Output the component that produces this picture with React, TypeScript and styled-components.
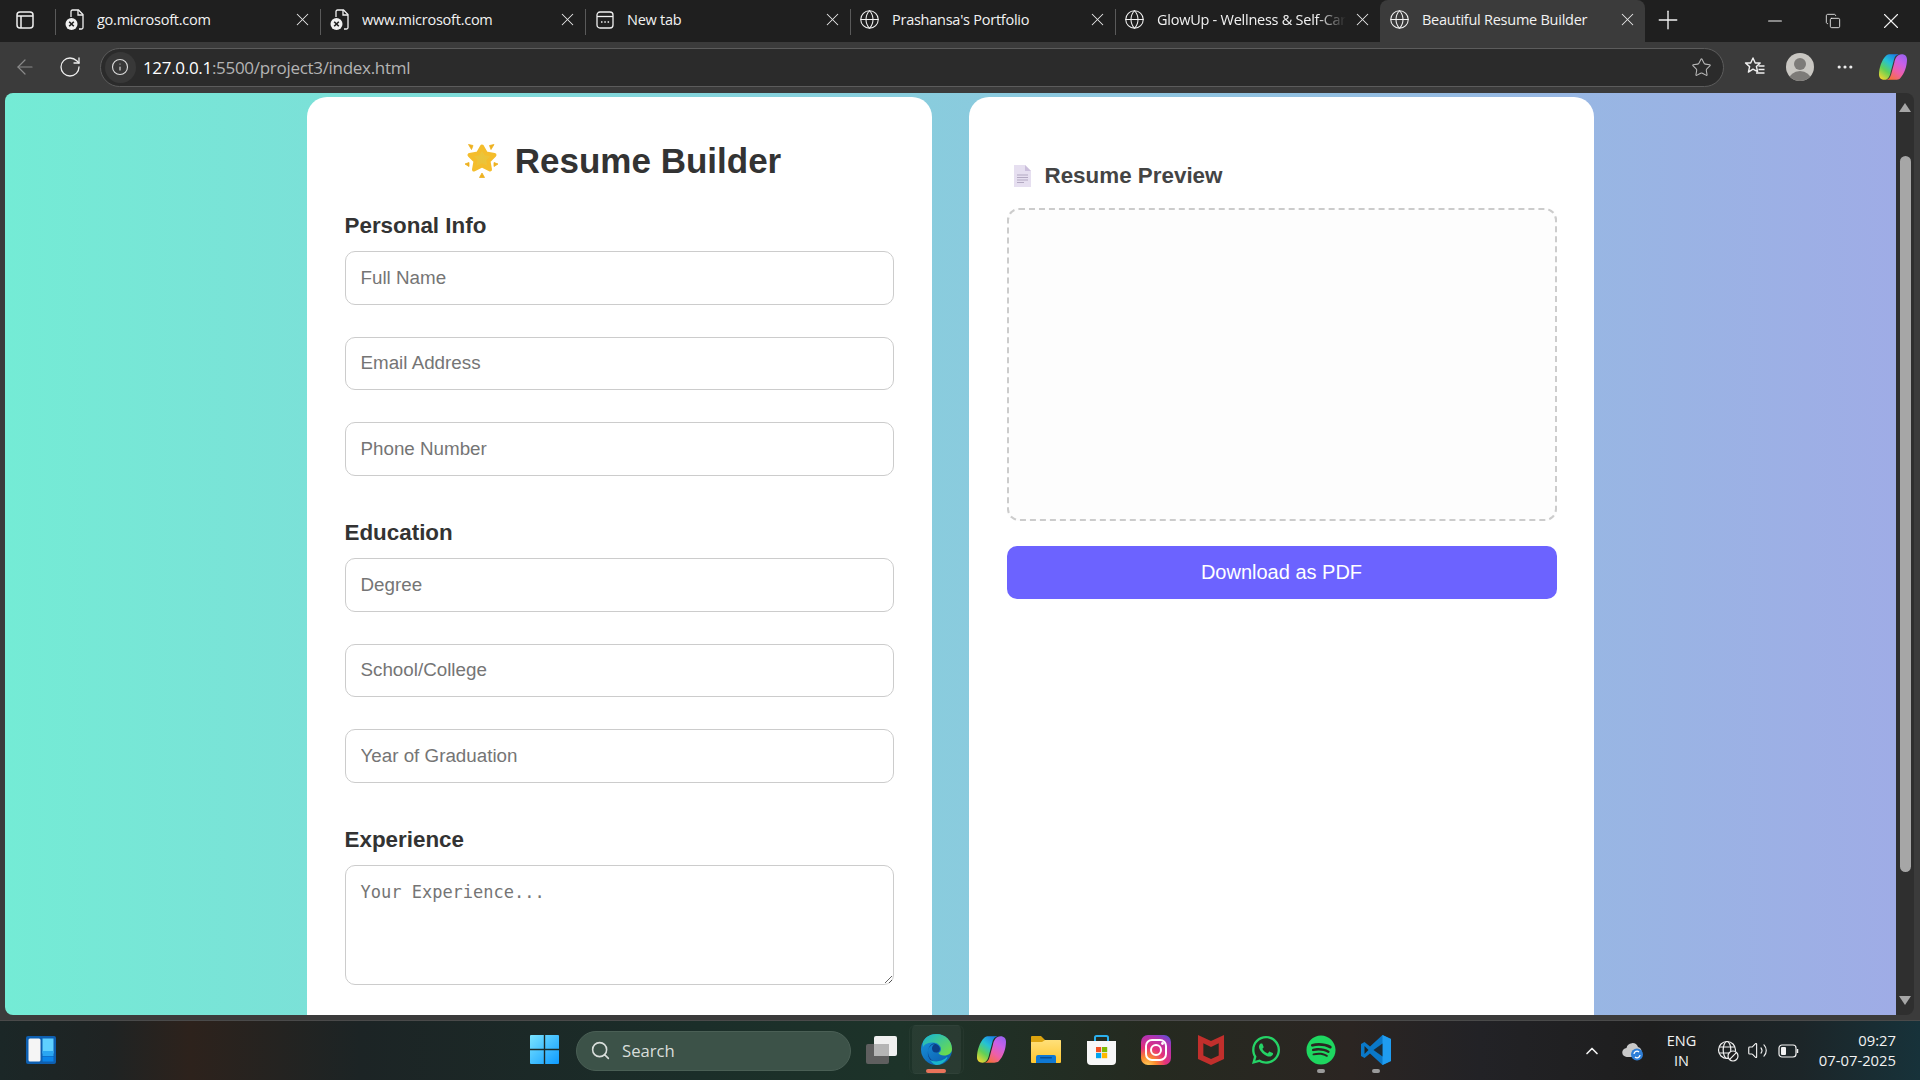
import * as React from 'react';
import styled, { createGlobalStyle } from 'styled-components';
import { ArrowLeft, ChevronUp, Copy, Ellipsis, Globe, Info, Minus, Plus, RotateCw, Search, Star, Volume2, X } from 'lucide-react';
import { FaWhatsapp, FaSpotify } from 'react-icons/fa';
import { SiMcafee } from 'react-icons/si';

const GlobalStyle = createGlobalStyle`
  html, body { margin: 0; padding: 0; background: #1f1f1f; }
  * { box-sizing: border-box; }
`;

const uiFont = `"Open Sans", "Noto Sans", sans-serif`;
const pageFont = `"Liberation Sans", Arial, sans-serif`;

const Screen = styled.div`
  width: 1920px;
  height: 1080px;
  display: flex;
  flex-direction: column;
  overflow: hidden;
  font-family: ${uiFont};
`;

const TabBar = styled.div`
  height: 42px;
  flex: none;
  display: flex;
  background: #1f1f1f;
  color: #f2f2f2;
`;

const SideButton = styled.div`
  width: 55px;
  padding: 11px 0 0 16px;
`;

const Tab = styled.div<{ $active?: boolean }>`
  width: 265px;
  height: 42px;
  padding: 0 6px 3px 9px;
  display: flex;
  align-items: center;
  position: relative;
  font-size: 14.5px;
  letter-spacing: -0.25px;
  background: ${(p) => (p.$active ? '#3b3b3b' : 'transparent')};
  border-radius: ${(p) => (p.$active ? '8px 8px 0 0' : '0')};
  &::before {
    content: '';
    display: ${(p) => (p.$active ? 'none' : 'block')};
    position: absolute;
    left: 0;
    top: 9px;
    height: 26px;
    width: 1px;
    background: #5a5a5a;
  }
`;

const TabIcon = styled.div`
  width: 21px;
  height: 21px;
  flex: none;
  display: flex;
  align-items: center;
  justify-content: center;
`;

const TabTitle = styled.div<{ $fade?: boolean }>`
  flex: 1;
  margin-left: 12px;
  white-space: nowrap;
  overflow: hidden;
  ${(p) => p.$fade && 'mask-image: linear-gradient(to right, #000 85%, transparent 100%);'}
`;

const TabClose = styled.div`
  width: 24px;
  display: flex;
  justify-content: center;
  margin-left: 4px;
  color: #e8e8e8;
`;

const NewTab = styled.div`
  width: 46px;
  height: 40px;
  display: flex;
  align-items: center;
  justify-content: center;
`;

const WindowControls = styled.div`
  margin-left: auto;
  display: flex;
`;

const WindowButton = styled.div`
  width: 58px;
  height: 42px;
  display: flex;
  align-items: center;
  justify-content: center;
`;

const Toolbar = styled.div`
  height: 51px;
  flex: none;
  background: #3b3b3b;
  display: flex;
  align-items: center;
  padding-bottom: 1px;
  color: #ededed;
`;

const NavButton = styled.div<{ $width: number; $dim?: boolean }>`
  width: ${(p) => p.$width}px;
  display: flex;
  justify-content: center;
  color: ${(p) => (p.$dim ? '#8a8a8a' : '#ededed')};
`;

const AddressBar = styled.div`
  width: 1626px;
  height: 39px;
  margin-left: 10px;
  margin-right: 9px;
  background: #2b2b2b;
  border: 1.5px solid #5c5c5c;
  border-radius: 20px;
  display: flex;
  align-items: center;
  padding: 0 11px 0 4px;
`;

const SiteInfo = styled.div`
  width: 31px;
  height: 31px;
  border-radius: 50%;
  background: #383838;
  display: flex;
  align-items: center;
  justify-content: center;
  color: #dcdcdc;
`;

const Url = styled.div`
  margin-left: 7px;
  flex: 1;
  font-size: 17px;
  letter-spacing: -0.3px;
  color: #b4b4b4;
  span { color: #fff; }
`;

const Avatar = styled.div`
  width: 28px;
  height: 28px;
  border-radius: 50%;
  background: #c9c7c2;
  position: relative;
  overflow: hidden;
  &::before {
    content: '';
    position: absolute;
    left: 8px;
    top: 5px;
    width: 12px;
    height: 12px;
    border-radius: 50%;
    background: #7d7b78;
  }
  &::after {
    content: '';
    position: absolute;
    left: 3px;
    top: 18px;
    width: 22px;
    height: 18px;
    border-radius: 50%;
    background: #7d7b78;
  }
`;

const Viewport = styled.div`
  flex: 1;
  min-height: 0;
  display: flex;
  background: #3b3b3b;
  padding: 0 6px 5px 5px;
  border-bottom: 1px solid #4a4a4a;
`;

const Page = styled.main`
  flex: 1;
  min-width: 0;
  overflow: hidden;
  display: flex;
  justify-content: center;
  align-items: flex-start;
  gap: 37px;
  padding-top: 4px;
  border-radius: 8px 0 0 8px;
  background: linear-gradient(to right, #74ebd5, #9face6);
  font-family: ${pageFont};
`;

const Card = styled.section`
  width: 625px;
  flex: none;
  min-height: 1000px;
  background: #fff;
  border-radius: 20px;
  padding: 37.5px;
`;

const Title = styled.h1`
  margin: 5px 0 30px;
  display: flex;
  justify-content: center;
  align-items: center;
  gap: 16px;
  color: #333;
  font-size: 35px;
  line-height: 42px;
  font-weight: 700;
  svg { margin-left: 7px; }
`;

const SectionTitle = styled.h3`
  margin: 0 0 12.5px;
  color: #333;
  font-size: 22.4px;
  line-height: 27px;
  font-weight: 700;
`;

const Group = styled.div`
  padding-bottom: 11px;
`;

const Field = styled.input`
  display: block;
  width: 549px;
  height: 53.5px;
  margin-bottom: 32px;
  padding: 0 15px;
  border: 1px solid #ccc;
  border-radius: 10px;
  font-family: ${pageFont};
  font-size: 18.8px;
  background: #fff;
  &::placeholder { color: #757575; opacity: 1; }
`;

const TextArea = styled.textarea`
  display: block;
  width: 549px;
  height: 120px;
  padding: 16px 15px;
  border: 1px solid #ccc;
  border-radius: 10px;
  font-family: "DejaVu Sans Mono", monospace;
  font-size: 17px;
  background: #fff;
  &::placeholder { color: #757575; opacity: 1; }
`;

const PreviewTitle = styled.h3`
  margin: 22.7px 0 13.8px;
  display: flex;
  align-items: center;
  gap: 14px;
  color: #444;
  font-size: 22.4px;
  line-height: 37px;
  font-weight: 700;
  svg { margin-left: 7px; }
`;

const PreviewBox = styled.div`
  height: 313px;
  border: 2px dashed #ccc;
  border-radius: 12px;
  background: #fdfdfd;
`;

const DownloadButton = styled.button`
  display: block;
  width: 100%;
  height: 53px;
  margin-top: 25px;
  border: none;
  border-radius: 10px;
  background: #6c63ff;
  color: #fff;
  font-family: ${pageFont};
  font-size: 20px;
`;

const ScrollBar = styled.div`
  width: 18px;
  flex: none;
  background: #2f2f2f;
  border-radius: 0 8px 8px 0;
  display: flex;
  flex-direction: column;
  align-items: center;
  padding: 10px 0;
  color: #a6a6a6;
`;

const Thumb = styled.div`
  width: 11px;
  height: 716px;
  margin-top: 44px;
  background: #a6a6a6;
  border-radius: 6px;
`;

const Arrow = styled.div<{ $down?: boolean }>`
  width: 0;
  height: 0;
  border-left: 6px solid transparent;
  border-right: 6px solid transparent;
  ${(p) => (p.$down ? 'border-top: 9px solid #a6a6a6; margin-top: auto;' : 'border-bottom: 9px solid #a6a6a6;')}
`;

const Taskbar = styled.footer`
  height: 59px;
  flex: none;
  display: flex;
  align-items: center;
  background: linear-gradient(to right, #1b2727 0, #1f2323 110px, #2d221c 190px, #1c2425 360px, #1b2e29 700px, #1d3329 900px, #252a20 1150px, #2b2522 1350px, #222226 1480px, #1e1e1e 1650px, #1c2528 1800px, #17323a 1920px);
  color: #f2f2f2;
`;

const WidgetsButton = styled.div`
  width: 517px;
  padding-left: 26px;
  margin-top: -2px;
  display: flex;
`;

const TaskButton = styled.div<{ $active?: boolean; $dot?: string }>`
  width: 55px;
  height: 49px;
  margin-top: -2px;
  display: flex;
  align-items: center;
  justify-content: center;
  position: relative;
  border-radius: 6px;
  ${(p) => p.$active && 'background: rgba(255,255,255,0.05); box-shadow: inset 0 0 0 1px rgba(255,255,255,0.03); background-clip: content-box; padding: 0 3px;'}
  ${(p) =>
    p.$dot &&
    `&::after {
      content: '';
      position: absolute;
      left: 50%;
      bottom: 1px;
      width: ${p.$active ? 20 : 8}px;
      height: 4px;
      margin-left: ${p.$active ? -10 : -4}px;
      border-radius: 2px;
      background: ${p.$dot};
    }`}
`;

const SearchPill = styled.div`
  width: 275px;
  height: 40px;
  margin: 0 2.5px 0 4px;
  display: flex;
  align-items: center;
  padding-left: 13px;
  gap: 11px;
  border-radius: 20px;
  background: #3c5248;
  border: 1px solid #4a5f55;
  font-size: 16.7px;
  color: #d9dedb;
`;

const Tray = styled.div`
  margin-left: auto;
  display: flex;
  align-items: center;
  padding-right: 24px;
`;

const TrayItem = styled.div<{ $width: number }>`
  width: ${(p) => p.$width}px;
  display: flex;
  justify-content: center;
  align-items: center;
`;

const Lang = styled.div`
  width: 67px;
  text-align: center;
  font-size: 14.5px;
  line-height: 20px;
`;

const Clock = styled.div`
  width: 94px;
  text-align: right;
  font-size: 14.8px;
  line-height: 20px;
  margin-top: -2px;
`;

const DocXIcon = () => (
  <svg width="20" height="22" viewBox="0 0 20 22" fill="none">
    <path d="M6 8V2.5A1.5 1.5 0 0 1 7.5 1h6L18 5.5V18.5A1.5 1.5 0 0 1 16.5 20H14" stroke="#f0f0f0" strokeWidth="1.3" />
    <path d="M13 1v5h5" stroke="#f0f0f0" strokeWidth="1.3" />
    <circle cx="6.5" cy="15" r="6" fill="#f0f0f0" />
    <path d="M4.2 12.7l4.6 4.6M8.8 12.7l-4.6 4.6" stroke="#1f1f1f" strokeWidth="1.6" />
  </svg>
);

const NewTabIcon = () => (
  <svg width="20" height="20" viewBox="0 0 20 20" fill="none" stroke="#f0f0f0" strokeWidth="1.3">
    <rect x="2" y="2" width="16" height="16" rx="3" />
    <path d="M2 6.5h16" />
    <path d="M6 12h1.5M9.3 12h1.5M12.6 12h1.5" strokeWidth="1.6" />
  </svg>
);

const SidebarIcon = () => (
  <svg width="18" height="18" viewBox="0 0 18 18" fill="none" stroke="#efefef" strokeWidth="1.5">
    <rect x="1" y="1" width="16" height="16" rx="3" />
    <path d="M1 5h16M5 5v12" />
  </svg>
);

const FavoritesIcon = () => (
  <svg width="22" height="22" viewBox="0 0 22 22" fill="none" stroke="#f0f0f0" strokeWidth="1.4" strokeLinejoin="round">
    <path d="M9 2l2.2 5h5l-3.8 3.5 1.2 5.2L9 13.2l-4.6 2.9 1.2-5.500L1.5 7h5.2z" />
    <path d="M14.500 10h6M14.500 13.500h6M12 17h8.500" />
  </svg>
);

const CopilotIcon = ({ size }: { size: number }) => (
  <svg width={size} height={size} viewBox="0 0 32 30">
    <defs>
      <linearGradient id={`cpA${size}`} x1="0.75" y1="0" x2="0.1" y2="1">
        <stop offset="0" stopColor="#1a7fe8" />
        <stop offset="0.35" stopColor="#25c2d4" />
        <stop offset="0.65" stopColor="#62d056" />
        <stop offset="1" stopColor="#f8d62e" />
      </linearGradient>
      <linearGradient id={`cpB${size}`} x1="0.25" y1="1" x2="0.85" y2="0">
        <stop offset="0" stopColor="#f6703a" />
        <stop offset="0.35" stopColor="#ee5fa8" />
        <stop offset="0.7" stopColor="#c760e8" />
        <stop offset="1" stopColor="#9a62ee" />
      </linearGradient>
    </defs>
    <path d="M8 2C9.500 .8 11 .5 13 .5H24C20 .5 18 3 17 7L13.500 20C12.500 25 11 29.500 6 29.500C2 29.500 0 27 0 23.500C0 16 3 7 8 2Z" fill={`url(#cpA${size})`} />
    <path d="M24 28C22.500 29.200 21 29.500 19 29.500H8C11 29.500 13 27 14 23L17.500 10C18.500 5 21 .5 26 .5C30 .5 32 3 32 6.500C32 14 29 23 24 28Z" fill={`url(#cpB${size})`} />
  </svg>
);

const WidgetsIcon = () => (
  <svg width="30" height="28" viewBox="0 0 30 28">
    <rect width="30" height="28" rx="2" fill="#0e5fb0" />
    <rect x="2.500" y="2.500" width="12" height="23" rx="1.500" fill="#f5f5f5" />
    <rect x="16.500" y="2.500" width="11" height="15" fill="#5fd0ff" />
    <rect x="16.500" y="15" width="11" height="5" fill="#2aa6f2" />
    <rect x="16.500" y="20.500" width="11" height="5" fill="#0b84e8" />
  </svg>
);

const WindowsIcon = () => (
  <svg width="29" height="29" viewBox="0 0 29 29">
    <defs>
      <linearGradient id="winBlue" x1="0" y1="0" x2="1" y2="1">
        <stop offset="0" stopColor="#7ae4ff" />
        <stop offset="1" stopColor="#0e9bff" />
      </linearGradient>
    </defs>
    <path d="M1 0h12.800v13.800H0V1a1 1 0 0 1 1-1zM15.200 0H28a1 1 0 0 1 1 1v12.800H15.200zM0 15.200h13.800V29H1a1 1 0 0 1-1-1zM15.200 15.200H29V28a1 1 0 0 1-1 1H15.200z" fill="url(#winBlue)" />
  </svg>
);

const TaskViewIcon = () => (
  <svg width="31" height="28" viewBox="0 0 31 28">
    <rect x="0" y="8" width="23" height="20" rx="2" fill="#5f5f5f" />
    <rect x="8" y="0" width="23" height="20" rx="2" fill="#f0f0f0" />
    <rect x="8" y="8" width="15" height="12" fill="#b5b5b5" />
  </svg>
);

const EdgeIcon = () => (
  <svg width="31" height="31" viewBox="0 0 31 31">
    <defs>
      <linearGradient id="edgeGreen" x1="0.2" y1="0" x2="1" y2="0.8">
        <stop offset="0" stopColor="#1eb8c8" />
        <stop offset="1" stopColor="#6ddc4a" />
      </linearGradient>
      <linearGradient id="edgeBlue" x1="0" y1="0" x2="0.7" y2="1">
        <stop offset="0" stopColor="#1a9ae0" />
        <stop offset="1" stopColor="#0c5fb0" />
      </linearGradient>
    </defs>
    <circle cx="15.500" cy="15.500" r="15.500" fill="url(#edgeBlue)" />
    <path d="M2 8C4 3 9 0 15.500 0 24 0 31 6.500 31 15c0 4-3.500 6.500-8 6.500-3 0-5-1-5.500-2.500 2-1 2.500-2.500 2.500-4 0-3-3-6.500-8-6.500-4 0-8 1-10 4.500z" fill="url(#edgeGreen)" />
    <path d="M12 9.500c4 0 7 2.500 7 5.500 0 1.500-1 3-3 3.500-3 .5-5-1.500-5-4 0-2 1-3.500 3-4.500-3 0-7 3-7 8 0 5 4 10 10 11-5 0-9-3-10-8-.5-5 1-10 5-11.500z" fill="#0b3f86" />
    <path d="M16 31c-2 0-5-2-7-5 2 1 6 2 9 1 3-.5 6-2 8-4 .5 0 .5 1 0 1.500-2 3.500-6 6.500-10 6.500z" fill="#1bb6c9" />
  </svg>
);

const ExplorerIcon = () => (
  <svg width="30" height="27" viewBox="0 0 30 27">
    <defs>
      <linearGradient id="folderY" x1="0" y1="0" x2="0" y2="1">
        <stop offset="0" stopColor="#ffe07a" />
        <stop offset="1" stopColor="#ffc62e" />
      </linearGradient>
    </defs>
    <path d="M1 0h9l4 4h15a1 1 0 0 1 1 1v6H0V1a1 1 0 0 1 1-1z" fill="#dca40f" />
    <path d="M0 6h11l3-2h15a1 1 0 0 1 1 1v21a1 1 0 0 1-1 1H1a1 1 0 0 1-1-1z" fill="url(#folderY)" />
    <path d="M5 27v-6a2 2 0 0 1 2-2h16a2 2 0 0 1 2 2v6z" fill="#0f78d4" />
    <rect x="9" y="21" width="12" height="1.500" rx=".7" fill="#0b4f94" />
  </svg>
);

const StoreIcon = () => (
  <svg width="29" height="30" viewBox="0 0 29 30">
    <path d="M8 6V2.500A1.500 1.500 0 0 1 9.500 1h10A1.500 1.500 0 0 1 21 2.500V6" fill="none" stroke="#2bb0ee" strokeWidth="2" />
    <path d="M0 6h29v20a4 4 0 0 1-4 4H4a4 4 0 0 1-4-4z" fill="#f7f7f7" />
    <rect x="9" y="12" width="5.200" height="5.200" fill="#f25022" />
    <rect x="15" y="12" width="5.200" height="5.200" fill="#7fba00" />
    <rect x="9" y="18" width="5.200" height="5.200" fill="#00a4ef" />
    <rect x="15" y="18" width="5.200" height="5.200" fill="#ffb900" />
  </svg>
);

const InstagramIcon = () => (
  <svg width="30" height="30" viewBox="0 0 30 30">
    <defs>
      <radialGradient id="igBg" cx="0.2" cy="1.050" r="1.250">
        <stop offset="0" stopColor="#ffd45e" />
        <stop offset="0.25" stopColor="#fb8a2e" />
        <stop offset="0.5" stopColor="#e5327a" />
        <stop offset="0.8" stopColor="#b532b0" />
        <stop offset="1" stopColor="#5b50d6" />
      </radialGradient>
    </defs>
    <rect width="30" height="30" rx="7" fill="url(#igBg)" />
    <rect x="5" y="5" width="20" height="20" rx="6" fill="none" stroke="#fff" strokeWidth="2" />
    <circle cx="15" cy="15" r="5" fill="none" stroke="#fff" strokeWidth="2" />
    <circle cx="21.500" cy="8.500" r="1.400" fill="#fff" />
  </svg>
);

const VsCodeIcon = () => (
  <svg width="30" height="30" viewBox="0 0 30 30">
    <path d="M21.500 0L30 4v22l-8.500 4L9 18.500 3.500 23 0 21V9l3.500-2L9 11.500z" fill="#0a78c8" />
    <path d="M21.500 0L30 4v22l-8.500 4z" fill="#1f9cf0" />
    <path d="M21.500 8.500L12.500 15l9 6.500z" fill="#1f1f1f" opacity="0.85" />
    <path d="M3.500 11L7.500 15l-4 4z" fill="#1f2422" />
  </svg>
);

const CloudSyncIcon = () => (
  <svg width="22" height="20" viewBox="0 0 22 20">
    <path d="M5 16a4.500 4.500 0 0 1-.5-9A6 6 0 0 1 16 6a4 4 0 0 1 2 7v3z" fill="#c9c9c9" />
    <circle cx="15" cy="13.500" r="6" fill="#2f7fd8" />
    <path d="M12 13a3 3 0 0 1 5-2M18 14a3 3 0 0 1-5 2" fill="none" stroke="#fff" strokeWidth="1.300" />
  </svg>
);

const GlobeBlockedIcon = () => (
  <svg width="22" height="22" viewBox="0 0 22 22" fill="none" stroke="#f2f2f2" strokeWidth="1.200">
    <circle cx="10" cy="10" r="8.500" />
    <ellipse cx="10" cy="10" rx="3.800" ry="8.500" />
    <path d="M2 7h16M2 13h16" />
    <circle cx="16" cy="16" r="5" fill="#1e1e1e" />
    <path d="M12.700 19.300l6.600-6.600" />
  </svg>
);

const BatteryIcon = () => (
  <svg width="21" height="14" viewBox="0 0 21 14" fill="none">
    <rect x="1" y="1" width="17" height="12" rx="3" stroke="#f2f2f2" strokeWidth="1.200" />
    <rect x="3" y="3" width="5" height="8" rx="1" fill="#f2f2f2" />
    <path d="M19.500 5v4" stroke="#f2f2f2" strokeWidth="1.500" />
  </svg>
);

const StarEmoji = () => (
  <svg width="34" height="35" viewBox="0 0 34 35">
    <defs>
      <radialGradient id="starFill" cx="0.5" cy="0.5" r="0.55">
        <stop offset="0" stopColor="#e8c53c" />
        <stop offset="0.7" stopColor="#efc136" />
        <stop offset="1" stopColor="#f6ba2a" />
      </radialGradient>
    </defs>
    <path d="M17 3.500L21 10.500 29.500 12 23.500 18 25 26.500 17 22.500 9 26.500 10.500 18 4.500 12 13 10.500Z" fill="url(#starFill)" stroke="#f4bd2c" strokeWidth="4" strokeLinejoin="round" />
    <path d="M3.500 1.500L8 2.500 6.500 6.500ZM29 1.500L24.500 2.500 26 6.500ZM0 21L4 19.500 4 23.500ZM33 21L29 19.500 29 23.500ZM17 30L19.500 34.500H14.500Z" fill="#eeb120" stroke="#eeb120" strokeWidth="0.8" strokeLinejoin="round" />
  </svg>
);

const PageEmoji = () => (
  <svg width="17" height="22" viewBox="0 0 17 22">
    <path d="M0 0h11l6 6v16H0z" fill="#e6dff0" />
    <path d="M11 0l6 6h-6z" fill="#cbbfdc" />
    <path d="M3 10h11M3 12.500h11M3 15h11M3 17.500h7" stroke="#b3a9c2" strokeWidth="1" />
  </svg>
);

const tabs = [
  { title: 'go.microsoft.com', icon: <DocXIcon /> },
  { title: 'www.microsoft.com', icon: <DocXIcon /> },
  { title: 'New tab', icon: <NewTabIcon /> },
  { title: "Prashansa's Portfolio", icon: <Globe size={21} strokeWidth={1.2} /> },
  { title: 'GlowUp - Wellness & Self-Care', icon: <Globe size={21} strokeWidth={1.2} />, fade: true },
  { title: 'Beautiful Resume Builder', icon: <Globe size={21} strokeWidth={1.2} />, active: true },
];

const sections = [
  { title: 'Personal Info', fields: ['Full Name', 'Email Address', 'Phone Number'] },
  { title: 'Education', fields: ['Degree', 'School/College', 'Year of Graduation'] },
];

export default function App() {
  return (
    <Screen>
      <GlobalStyle />
      <TabBar>
        <SideButton>
          <SidebarIcon />
        </SideButton>
        {tabs.map((t) => (
          <Tab key={t.title} $active={t.active}>
            <TabIcon>{t.icon}</TabIcon>
            <TabTitle $fade={t.fade}>{t.title}</TabTitle>
            <TabClose>
              <X size={21} strokeWidth={1.2} />
            </TabClose>
          </Tab>
        ))}
        <NewTab>
          <Plus size={30} strokeWidth={1.1} />
        </NewTab>
        <WindowControls>
          <WindowButton>
            <Minus size={22} strokeWidth={1.1} />
          </WindowButton>
          <WindowButton>
            <Copy size={16} strokeWidth={1.3} />
          </WindowButton>
          <WindowButton>
            <X size={26} strokeWidth={1} />
          </WindowButton>
        </WindowControls>
      </TabBar>

      <Toolbar>
        <NavButton $width={50} $dim>
          <ArrowLeft size={24} strokeWidth={1.2} />
        </NavButton>
        <NavButton $width={40}>
          <RotateCw size={24} strokeWidth={1.3} />
        </NavButton>
        <AddressBar>
          <SiteInfo>
            <Info size={18} strokeWidth={1.5} />
          </SiteInfo>
          <Url>
            <span>127.0.0.1</span>:5500/project3/index.html
          </Url>
          <Star size={21} strokeWidth={1.2} color="#b8b8b8" />
        </AddressBar>
        <NavButton $width={44}>
          <FavoritesIcon />
        </NavButton>
        <NavButton $width={46}>
          <Avatar />
        </NavButton>
        <NavButton $width={43}>
          <Ellipsis size={20} strokeWidth={1.8} />
        </NavButton>
        <NavButton $width={54}>
          <CopilotIcon size={28} />
        </NavButton>
      </Toolbar>

      <Viewport>
        <Page>
          <Card>
            <Title>
              <StarEmoji />
              Resume Builder
            </Title>
            {sections.map((s) => (
              <Group key={s.title}>
                <SectionTitle>{s.title}</SectionTitle>
                {s.fields.map((f) => (
                  <Field key={f} placeholder={f} readOnly />
                ))}
              </Group>
            ))}
            <SectionTitle>Experience</SectionTitle>
            <TextArea placeholder="Your Experience..." readOnly />
          </Card>
          <Card>
            <PreviewTitle>
              <PageEmoji />
              Resume Preview
            </PreviewTitle>
            <PreviewBox />
            <DownloadButton>Download as PDF</DownloadButton>
          </Card>
        </Page>
        <ScrollBar>
          <Arrow />
          <Thumb />
          <Arrow $down />
        </ScrollBar>
      </Viewport>

      <Taskbar>
        <WidgetsButton>
          <WidgetsIcon />
        </WidgetsButton>
        <TaskButton>
          <WindowsIcon />
        </TaskButton>
        <SearchPill>
          <Search size={21} strokeWidth={1.8} />
          Search
        </SearchPill>
        <TaskButton>
          <TaskViewIcon />
        </TaskButton>
        <TaskButton $active $dot="#e8735a">
          <EdgeIcon />
        </TaskButton>
        <TaskButton>
          <CopilotIcon size={29} />
        </TaskButton>
        <TaskButton>
          <ExplorerIcon />
        </TaskButton>
        <TaskButton>
          <StoreIcon />
        </TaskButton>
        <TaskButton>
          <InstagramIcon />
        </TaskButton>
        <TaskButton>
          <SiMcafee size={30} color="#c12f2c" />
        </TaskButton>
        <TaskButton>
          <FaWhatsapp size={32} color="#25d366" />
        </TaskButton>
        <TaskButton $dot="#9a9a9a">
          <FaSpotify size={30} color="#1ed760" />
        </TaskButton>
        <TaskButton $dot="#9a9a9a">
          <VsCodeIcon />
        </TaskButton>
        <Tray>
          <TrayItem $width={50}>
            <ChevronUp size={20} strokeWidth={2} />
          </TrayItem>
          <TrayItem $width={31}>
            <CloudSyncIcon />
          </TrayItem>
          <Lang>
            ENG
            <br />
            IN
          </Lang>
          <TrayItem $width={26}>
            <GlobeBlockedIcon />
          </TrayItem>
          <TrayItem $width={33}>
            <Volume2 size={21} strokeWidth={1.3} />
          </TrayItem>
          <TrayItem $width={28}>
            <BatteryIcon />
          </TrayItem>
          <Clock>
            09:27
            <br />
            07-07-2025
          </Clock>
        </Tray>
      </Taskbar>
    </Screen>
  );
}
